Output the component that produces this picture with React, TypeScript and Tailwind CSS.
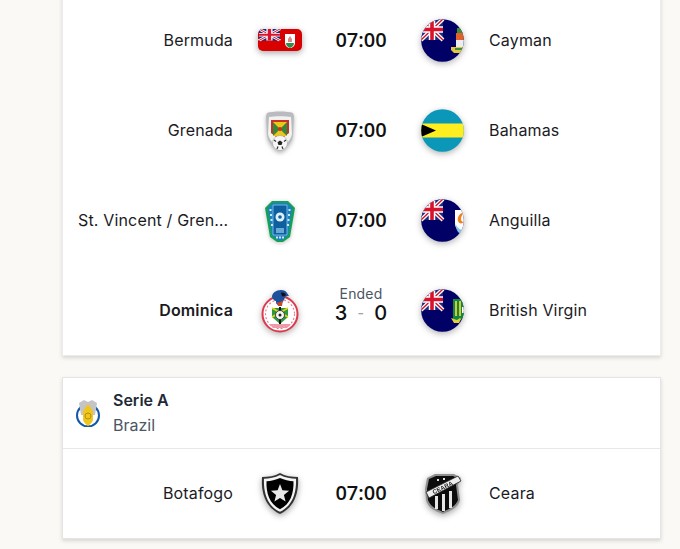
import type { ReactNode } from "react";

// drawn on a 22x21 canton, scaled where a flag needs it
const Union = () => (
  <g>
    <rect x="0" y="0" width="22" height="21" fill="#1a2a80" />
    <path d="M0 0L22 21M22 0L0 21" stroke="#fff" strokeWidth="4" />
    <path d="M0 0L22 21M22 0L0 21" stroke="#cf142b" strokeWidth="1.4" />
    <path d="M11 0V21M0 10.500H22" stroke="#fff" strokeWidth="6.500" />
    <path d="M11 0V21M0 10.500H22" stroke="#d8122b" strokeWidth="3.600" />
  </g>
);

const Round = ({ id, children }: { id: string; children: ReactNode }) => (
  <svg viewBox="0 0 44 44" className="w-11 h-11 drop-shadow-[0_2px_3px_rgba(0,0,0,0.3)]">
    <clipPath id={id}>
      <circle cx="22.500" cy="21.500" r="21.300" />
    </clipPath>
    <g clipPath={`url(#${id})`}>{children}</g>
  </svg>
);

const Ensign = ({ id, children }: { id: string; children: ReactNode }) => (
  <Round id={id}>
    <rect width="44" height="44" fill="#000066" />
    <g transform="translate(1 0)">
      <Union />
    </g>
    {children}
  </Round>
);

const Cayman = () => (
  <Ensign id="cayman">
    <rect x="37" y="9" width="6" height="5" fill="#3b8f3e" />
    <rect x="36" y="14" width="8" height="7" fill="#e2602a" />
    <rect x="36" y="21" width="8" height="7" fill="#e8eef2" />
    <path d="M31 28h13v3l-3 3h-7l-3-3z" fill="#e6c640" />
    <path d="M35 29h7v2h-7z" fill="#3b8f3e" />
  </Ensign>
);

const Anguilla = () => (
  <Ensign id="anguilla">
    <path d="M35 11h9v21l-3 1c-3-1-6-4-6-9z" fill="#fff" />
    <path d="M36 26c2 3 4 5 8 6v2h-5c-2-2-3-4-3-8z" fill="#7fc6e8" />
    <path d="M42 14c-3 1-5 5-4 8s4 3 6 1c-2 0-3-1-3-3s1-4 2-5z" fill="#f08020" />
  </Ensign>
);

const Bvi = () => (
  <Ensign id="bvi">
    <path d="M33 10h11v19l-6 3-5-2z" fill="#0f8a3c" />
    <path d="M35 12h2v15h-2zM39 12h2v15h-2z" fill="#d8c63a" />
    <path d="M31 29l6 2 3-2 1 1-2 4h-5z" fill="#e3cf3b" />
    <path d="M42 18h2v6h-2z" fill="#fff" />
  </Ensign>
);

const Bahamas = () => (
  <Round id="bahamas">
    <rect width="44" height="44" fill="#0a97b8" />
    <rect y="14.500" width="44" height="14" fill="#ffee1f" />
    <path d="M0 14.500L16 21.500L0 28.500Z" fill="#000" />
  </Round>
);

const Bermuda = () => (
  <svg viewBox="0 0 44 44" className="w-11 h-11 drop-shadow-[0_2px_3px_rgba(0,0,0,0.35)]">
    <clipPath id="bermuda">
      <rect x="0" y="10" width="44" height="22" rx="5" />
    </clipPath>
    <g clipPath="url(#bermuda)">
      <rect y="10" width="44" height="22" fill="#d90000" />
      <g transform="translate(1 10) scale(0.95 0.55)">
        <Union />
      </g>
      <path d="M27 15h10v9c0 3-3 5-5 5s-5-2-5-5z" fill="#fff" />
      <path d="M28 24h8c0 3-2 4-4 5-2-1-4-2-4-5z" fill="#2f8f4a" />
      <path d="M30 20l2-3 2 3v3h-4z" fill="#d98a8a" />
    </g>
  </svg>
);

const Grenada = () => (
  <svg viewBox="0 0 44 44" className="w-11 h-11 drop-shadow-[0_2px_2px_rgba(0,0,0,0.3)]">
    <path d="M9 4c5-2 21-2 26 0l1 3-1 19c-1 8-7 13-13 16C16 39 10 34 9 26L8 7z" fill="#b9bbc0" />
    <path d="M11 8c5-1 17-1 22 0l1 17c-1 6-6 11-12 13-6-2-11-7-12-13z" fill="#f2f2ee" />
    <path d="M13 11h18v13l-9 7-9-7z" fill="#c7312a" />
    <path d="M15 13l7 7-7 7zM29 13l-7 7 7 7z" fill="#2f8b3a" />
    <path d="M15 13h14L22 20zM22 20l7 7H15z" fill="#e9c818" />
    <circle cx="22" cy="20" r="2" fill="#c7312a" />
    <circle cx="22" cy="34" r="7.500" fill="#f6f6f6" stroke="#999" strokeWidth="0.5" />
    <path d="M22 31.500l2.500 1.800-1 2.700h-3l-1-2.700z" fill="#222" />
    <path d="M16 31l2 1.500M28 31l-2 1.500M19 40l1-2.500M25 40l-1-2.500" stroke="#333" strokeWidth="1.200" />
  </svg>
);

const StVincent = () => (
  <svg viewBox="0 0 44 44" className="w-11 h-11 drop-shadow-[0_1px_2px_rgba(0,0,0,0.25)]">
    <path d="M7 9l7-7h16l7 7-5 29-7 5h-6l-7-5z" fill="#14a05a" />
    <path d="M10 9l5-5h14l5 5-4 27-6 5h-4l-6-5z" fill="#1b7fc4" />
    <path d="M15 6h14v30H15z" fill="#0d5f9e" stroke="#8cc7ec" strokeWidth="0.8" />
    <circle cx="22" cy="18" r="4.500" fill="#dff0fa" />
    <circle cx="22" cy="18" r="1.800" fill="#0d5f9e" />
    <path d="M11.500 10h2v2h-2zM12 15h2v2h-2zM12.500 20h2v2h-2zM13 25h2v2h-2zM30.500 10h2v2h-2zM30 15h2v2h-2zM29.500 20h2v2h-2zM29 25h2v2h-2zM18 37.500h2v2h-2zM21 37.500h2v2h-2zM24 37.500h2v2h-2z" fill="#cfe6f5" />
    <path d="M18 29h8v5h-8z" fill="#6aa9d6" />
  </svg>
);

const Dominica = () => (
  <svg viewBox="0 0 44 44" className="w-11 h-11 drop-shadow-[0_2px_3px_rgba(0,0,0,0.3)]">
    <circle cx="22" cy="25" r="17.500" fill="#fff" stroke="#dd3a50" strokeWidth="2" />
    <circle cx="22" cy="25" r="14.500" fill="none" stroke="#e8798a" strokeWidth="1.100" strokeDasharray="2 2" />
    <path d="M11 35h22l-4 4H15z" fill="#ef9aa8" />
    <path d="M14 19h16v9l-8 7-8-7z" fill="#2a9a3d" />
    <path d="M14 19l16 9M30 19l-16 9" stroke="#e8d21a" strokeWidth="1.600" />
    <path d="M21 18h2v17h-2z" fill="#111" />
    <circle cx="22" cy="26" r="4.500" fill="#f3f3f3" stroke="#222" strokeWidth="0.8" />
    <circle cx="22" cy="26" r="1.500" fill="#222" />
    <path d="M14 8c0-4 4-7 9-7 3 0 5 1 6 3l2 3c-2 0-3 0-4 1-1 4-3 7-7 8-2-1-2-2-2-4-2 0-3-2-4-4z" fill="#1c4f9c" />
    <path d="M23 4c2-1 4 0 5 2-1 1-3 2-4 1z" fill="#111" />
    <path d="M19 13c2 1 4 0 6-2l-1 6h-4z" fill="#c8472e" />
  </svg>
);

const Botafogo = () => (
  <svg viewBox="0 0 44 44" className="w-11 h-11 drop-shadow-[0_2px_3px_rgba(0,0,0,0.35)]">
    <path d="M22 1c5 3 12 4 18 4 1 15-3 30-18 37C7 35 3 20 4 5c6 0 13-1 18-4z" fill="#333" />
    <path d="M22 3c5 2.700 11 3.700 16 3.800.6 13-3 27-16 33C9 34 5.400 20 6 6.800c5-.1 11-1.100 16-3.800z" fill="#f4f4f4" />
    <path d="M22 6c4.500 2 9 3 13.500 3.200.4 12-3 23-13.500 28C11.500 32 8 21 8.500 9.200 13 9 17.500 8 22 6z" fill="#000" />
    <path d="M22 12l2.400 6.300 6.700.4-5.200 4.300 1.700 6.500-5.600-3.600-5.600 3.600 1.700-6.500-5.200-4.300 6.700-.4z" fill="#e8e8e8" />
  </svg>
);

const Ceara = () => (
  <svg viewBox="0 0 44 44" className="w-11 h-11 drop-shadow-[0_2px_3px_rgba(0,0,0,0.35)]">
    <path d="M7 6l8-4h19l7 4-3 7 2 15c-2 8-10 11-17 14-8-3-15-6-17-14L5 17z" fill="#8f8f8f" />
    <path d="M9 7l7-3h17l6 3-3 6 2 15c-2 6-9 9-15 12-7-3-13-6-15-12L7 17z" fill="#0c0c0c" />
    <path d="M15 24h3v13h-3zM22 22h3v17h-3zM29 19h3v17h-3z" fill="#e6e6e6" />
    <path d="M6 20L38 4l3 5L9 26z" fill="#eee" stroke="#222" strokeWidth="0.8" />
    <text x="23" y="17.500" textAnchor="middle" fontSize="6" fontWeight="700" fontFamily="Liberation Sans, sans-serif" fill="#111" transform="rotate(-26 23 16)">CEARA</text>
    <path d="M17 7h2v2h-2zM23 6h2v2h-2z" fill="#ddd" />
  </svg>
);

const SerieA = () => (
  <svg viewBox="0 0 26 28" className="w-[26px] h-7">
    <circle cx="13" cy="16.500" r="11" fill="#fff" stroke="#1557a8" strokeWidth="2" />
    <path d="M4 4l5-3 4 2 4-2 5 3-2 12H6z" fill="#c4c4c6" />
    <path d="M13 5l5 7v9c-1 3-3 4-5 6-2-2-4-3-5-6v-9z" fill="#eec61d" />
    <circle cx="13" cy="17" r="3" fill="none" stroke="#b38f10" strokeWidth="1" />
  </svg>
);

type Match = {
  home: string;
  away: string;
  homeLogo: ReactNode;
  awayLogo: ReactNode;
  time?: string;
  score?: [number, number];
};

const caribbean: Match[] = [
  { home: "Bermuda", away: "Cayman", homeLogo: <Bermuda />, awayLogo: <Cayman />, time: "07:00" },
  { home: "Grenada", away: "Bahamas", homeLogo: <Grenada />, awayLogo: <Bahamas />, time: "07:00" },
  { home: "St. Vincent / Grenadines", away: "Anguilla", homeLogo: <StVincent />, awayLogo: <Anguilla />, time: "07:00" },
  { home: "Dominica", away: "British Virgin", homeLogo: <Dominica />, awayLogo: <Bvi />, score: [3, 0] },
];

const serieA: Match[] = [
  { home: "Botafogo", away: "Ceara", homeLogo: <Botafogo />, awayLogo: <Ceara />, time: "07:00" },
];

const MatchRow = ({ match, compact }: { match: Match; compact?: boolean }) => (
  <div className={`flex items-center tracking-[0.01em] ${compact ? "h-[89px] pb-px" : "h-[90px]"}`}>
    <div className="w-[171px] pl-[15px] pr-px shrink-0">
      <p className={`truncate text-right text-base text-[#1b1b1f] ${match.score ? "font-semibold" : ""}`}>
        {match.home}
      </p>
    </div>
    <div className="ml-[24px] w-11 h-11 mt-[2px] shrink-0">{match.homeLogo}</div>
    <div className="w-[118px] shrink-0 flex flex-col items-center">
      {match.score ? (
        <div className="flex flex-col items-center mb-[11px]">
          <span className="text-sm leading-[16px] text-[#4b5563]">Ended</span>
          <div className="flex items-center text-xl leading-[22px] font-medium text-[#111]">
            <span>{match.score[0]}</span>
            <span className="mx-[10px] text-sm text-[#9ca3af]">-</span>
            <span>{match.score[1]}</span>
          </div>
        </div>
      ) : (
        <span className="font-['Open_Sans',sans-serif] tracking-normal text-xl font-semibold text-[#111]">{match.time}</span>
      )}
    </div>
    <div className="w-11 h-11 mt-[2px] shrink-0">{match.awayLogo}</div>
    <p className="ml-[25px] text-base text-[#1b1b1f] truncate">{match.away}</p>
  </div>
);

export default function App() {
  return (
    <div className="h-[549px] overflow-hidden bg-[#faf9f6] font-['Inter',sans-serif]">
      <div className="ml-[62px] w-[599px] -mt-[5px] flex flex-col gap-[21px]">
        {/* Caribbean card */}
        <div className="bg-white border border-t-0 border-[#ececec] shadow-[0_2px_4px_rgba(0,0,0,0.14)]">
          {caribbean.map((m) => (
            <MatchRow key={m.home} match={m} />
          ))}
        </div>

        {/* Serie A card */}
        <div className="bg-white border border-[#e5e5e5] shadow-[0_2px_4px_rgba(0,0,0,0.14)]">
          <div className="flex items-center h-[71px] border-b border-[#e5e7eb] pl-[12px]">
            <SerieA />
            <div className="ml-[12px] mb-[2px]">
              <p className="text-base leading-[24px] font-semibold text-[#1f2937]">Serie A</p>
              <p className="text-base leading-[24px] mt-px text-[#4b5563]">Brazil</p>
            </div>
          </div>
          {serieA.map((m) => (
            <MatchRow key={m.home} match={m} compact />
          ))}
        </div>
      </div>
    </div>
  );
}
